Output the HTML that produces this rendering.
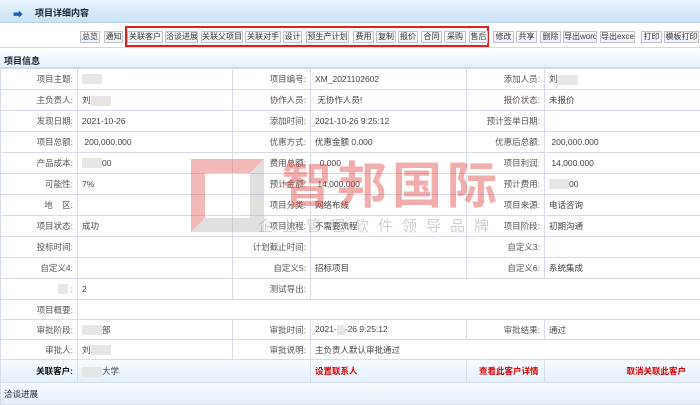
<!DOCTYPE html>
<html><head><meta charset="utf-8"><style>
*{margin:0;padding:0;box-sizing:border-box}
body{width:700px;height:403px;overflow:hidden;background:#fff;font-family:"Liberation Sans","Noto Sans CJK SC",sans-serif;font-size:9px;color:#333;position:relative}
.hdr{position:absolute;left:0;top:0;width:700px;height:23px;background:linear-gradient(#eaf4fd,#c9e2f7);border-bottom:1px solid #b8d4ec}
.hdr .t{position:absolute;left:35px;top:6px;font-weight:bold;color:#123;font-size:9px}
.hdr .a{position:absolute;left:13px;top:6px;color:#1560b0;font-size:10px}
.tb{position:absolute;left:0;top:24px;width:700px;height:24px;background:#fff;border-bottom:1px solid #d0dbe6}
.b{position:absolute;top:7px;height:12px;border:1px solid #b9c4cf;background:linear-gradient(#fff,#eef2f6);font-size:8px;line-height:10px;text-align:center;color:#333;white-space:nowrap;overflow:hidden}
.rb{position:absolute;left:125px;top:2px;width:364px;height:21px;border:2px solid #e02020}
.sec{position:absolute;left:0;top:48px;width:700px;height:20px;background:linear-gradient(#fff,#e4f0fa);border-bottom:1px solid #d0dbe6;font-weight:bold;padding:6px 0 0 4px;color:#223}
table{position:absolute;left:0;top:68px;border-collapse:collapse;width:700px;table-layout:fixed}
td{border:1px solid #d6dde6;font-size:8.5px;padding:0 4px;white-space:nowrap;overflow:hidden;color:#444}
td.l{text-align:right;color:#555}
.bl{display:inline-block;width:20px;height:10px;background:#e6e6e6;vertical-align:middle}
td.red{color:#d00;font-weight:bold}
.lb{background:linear-gradient(#f6fbff,#e2effa)}
.wm{position:absolute;left:282px;top:146px;font-size:50px;font-weight:bold;color:rgba(225,70,70,.45);letter-spacing:5px;font-family:"Noto Sans CJK SC",sans-serif}
.ws{position:absolute;left:258px;top:215px;font-size:15px;color:rgba(150,150,150,.45);letter-spacing:9px;font-family:"Noto Sans CJK SC",sans-serif}
</style></head><body>
<div class="hdr"><span class="a">➡</span><span class="t">项目详细内容</span></div>
<div class="tb">
<div class="rb"></div>
<div class="b" style="left:80px;width:20px">总览</div>
<div class="b" style="left:104px;width:19px">通知</div>
<div class="b" style="left:127px;width:36px">关联客户</div>
<div class="b" style="left:165px;width:33px">洽谈进展</div>
<div class="b" style="left:201px;width:42px">关联父项目</div>
<div class="b" style="left:245px;width:36px">关联对手</div>
<div class="b" style="left:283px;width:19px">设计</div>
<div class="b" style="left:306px;width:43px">预生产计划</div>
<div class="b" style="left:353px;width:21px">费用</div>
<div class="b" style="left:376px;width:20px">复制</div>
<div class="b" style="left:398px;width:20px">报价</div>
<div class="b" style="left:421px;width:21px">合同</div>
<div class="b" style="left:444px;width:22px">采购</div>
<div class="b" style="left:469px;width:19px">售后</div>
<div class="b" style="left:493px;width:21px">修改</div>
<div class="b" style="left:516px;width:21px">共享</div>
<div class="b" style="left:540px;width:21px">删除</div>
<div class="b" style="left:563px;width:34px">导出word</div>
<div class="b" style="left:600px;width:35px">导出excel</div>
<div class="b" style="left:641px;width:21px">打印</div>
<div class="b" style="left:664px;width:35px">模板打印</div>
</div>
<div class="sec">项目信息</div>
<table>
<colgroup><col style="width:77px"><col style="width:155px"><col style="width:78px"><col style="width:156px"><col style="width:78px"><col style="width:156px"></colgroup>
<tr style="height:21px"><td class="l">项目主题:</td><td><span class="bl"></span></td><td class="l">项目编号:</td><td>XM_2021102602</td><td class="l">添加人员:</td><td>刘<span class="bl"></span></td></tr>
<tr style="height:21px"><td class="l">主负责人:</td><td>刘<span class="bl"></span></td><td class="l">协作人员:</td><td>&nbsp;无协作人员!</td><td class="l">报价状态:</td><td>未报价</td></tr>
<tr style="height:21px"><td class="l">发现日期:</td><td>2021-10-26</td><td class="l">添加时间:</td><td>2021-10-26 9:25:12</td><td class="l">预计签单日期:</td><td></td></tr>
<tr style="height:21px"><td class="l">项目总额:</td><td>&nbsp;200,000.000</td><td class="l">优惠方式:</td><td>优惠金额 0.000</td><td class="l">优惠后总额:</td><td>&nbsp;200,000.000</td></tr>
<tr style="height:21px"><td class="l">产品成本:</td><td><span class="bl"></span>00</td><td class="l">费用总额:</td><td>&nbsp;&nbsp;0.000</td><td class="l">项目利润:</td><td>&nbsp;14,000.000</td></tr>
<tr style="height:21px"><td class="l">可能性:</td><td>7%</td><td class="l">预计金额:</td><td>&nbsp;14,000.000</td><td class="l">预计费用:</td><td><span class="bl"></span>00</td></tr>
<tr style="height:21px"><td class="l">地&nbsp;&nbsp;&nbsp;&nbsp;区:</td><td></td><td class="l">项目分类:</td><td>网络布线</td><td class="l">项目来源:</td><td>电话咨询</td></tr>
<tr style="height:21px"><td class="l">项目状态:</td><td>成功</td><td class="l">项目流程:</td><td>不需要流程</td><td class="l">项目阶段:</td><td>初期沟通</td></tr>
<tr style="height:21px"><td class="l">投标时间:</td><td></td><td class="l">计划截止时间:</td><td></td><td class="l">自定义3:</td><td></td></tr>
<tr style="height:21px"><td class="l">自定义4:</td><td></td><td class="l">自定义5:</td><td>招标项目</td><td class="l">自定义6:</td><td>系统集成</td></tr>
<tr style="height:21px"><td class="l"><span class="bl" style="width:10px"></span>&nbsp;:</td><td>2</td><td class="l">测试导出:</td><td colspan="3"></td></tr>
<tr style="height:20px"><td class="l">项目概要:</td><td colspan="5"></td></tr>
<tr style="height:20px"><td class="l">审批阶段:</td><td><span class="bl"></span>部</td><td class="l">审批时间:</td><td>2021-<span class="bl" style="width:8px"></span>-26 9:25:12</td><td class="l">审批结果:</td><td>通过</td></tr>
<tr style="height:20px"><td class="l">审批人:</td><td>刘<span class="bl"></span></td><td class="l">审批说明:</td><td colspan="3">主负责人默认审批通过</td></tr>
<tr style="height:23px" class="lb"><td class="l" style="color:#111;font-weight:bold">关联客户:</td><td colspan="2"><span class="bl"></span>大学</td><td class="red">设置联系人</td><td class="red" style="padding-left:12px">查看此客户详情</td><td class="red" style="text-align:right;padding-right:14px">取消关联此客户</td></tr>
<tr style="height:22px" class="lb"><td colspan="6" style="padding-left:3px;color:#223">洽谈进展</td></tr>
</table>
<svg style="position:absolute;left:188px;top:156px" width="78" height="78" viewBox="0 0 78 78">
<polygon points="3,3 76,3 62,17 17,17 17,62 3,76" fill="rgba(225,80,80,.4)"/>
<polygon points="62,17 76,3 76,76 3,76 17,62 62,62" fill="rgba(160,160,160,.32)"/>
</svg>
<div class="wm">智邦国际</div>
<div class="ws">企业管理软件领导品牌</div>
</body></html>
